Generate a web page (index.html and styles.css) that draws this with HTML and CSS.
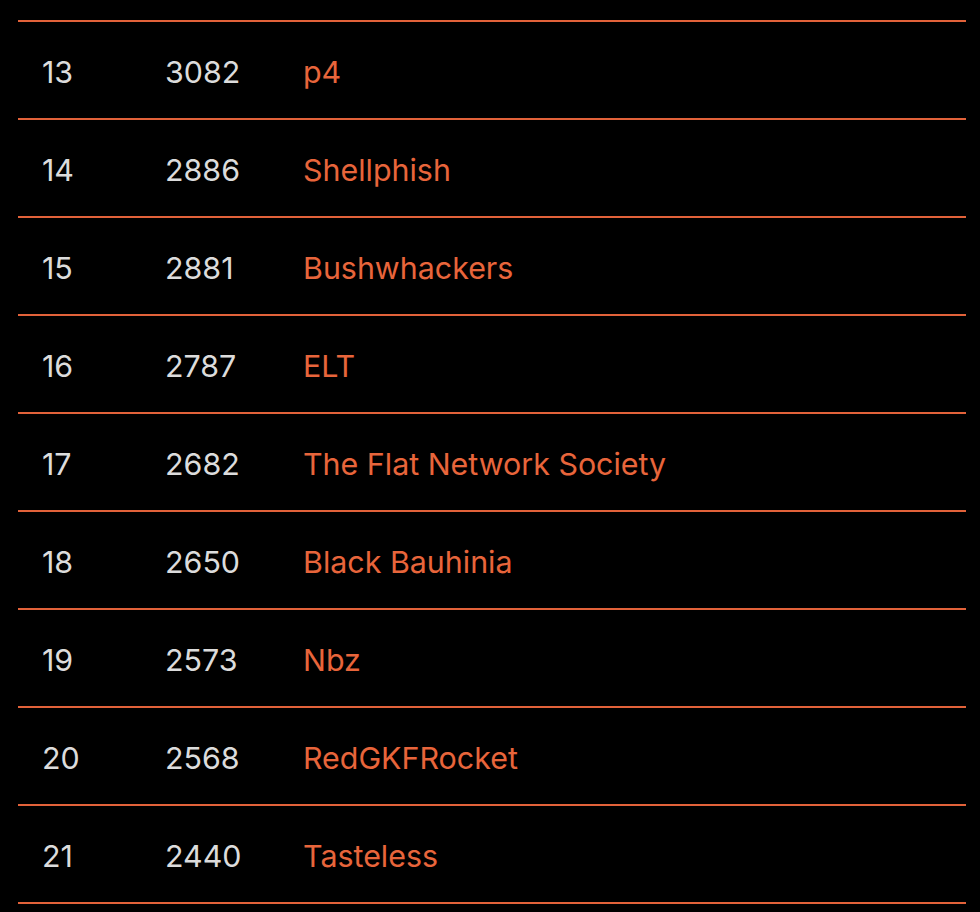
FILE: index.html
```html
<!DOCTYPE html>
<html>
<head>
<meta charset="utf-8">
<link rel="stylesheet" href="styles.css">
</head>
<body>
<div class="board">
  <div class="row"><span class="rank">13</span><span class="score">3082</span><a class="team">p4</a></div>
  <div class="row"><span class="rank">14</span><span class="score">2886</span><a class="team">Shellphish</a></div>
  <div class="row"><span class="rank">15</span><span class="score">2881</span><a class="team">Bushwhackers</a></div>
  <div class="row"><span class="rank">16</span><span class="score">2787</span><a class="team">ELT</a></div>
  <div class="row"><span class="rank">17</span><span class="score">2682</span><a class="team">The Flat Network Society</a></div>
  <div class="row"><span class="rank">18</span><span class="score">2650</span><a class="team">Black Bauhinia</a></div>
  <div class="row"><span class="rank">19</span><span class="score">2573</span><a class="team">Nbz</a></div>
  <div class="row"><span class="rank">20</span><span class="score">2568</span><a class="team">RedGKFRocket</a></div>
  <div class="row"><span class="rank">21</span><span class="score">2440</span><a class="team">Tasteless</a></div>
</div>
</body>
</html>
```
FILE: styles.css
```css
html, body {
  margin: 0;
  background: #000;
}
body {
  font-family: Inter, "Open Sans", sans-serif;
  font-size: 30.4px;
  color: #dcdcdc;
}
.board {
  margin: 20px 14px 0 18px;
  border-bottom: 2px solid #e2623a;
}
.row {
  display: grid;
  grid-template-columns: 123px 138px 1fr;
  align-items: center;
  height: 92px;
  padding: 4px 0 0 24px;
  border-top: 2px solid #e2623a;
}
.team {
  color: #e8653b;
  text-decoration: none;
}
```
